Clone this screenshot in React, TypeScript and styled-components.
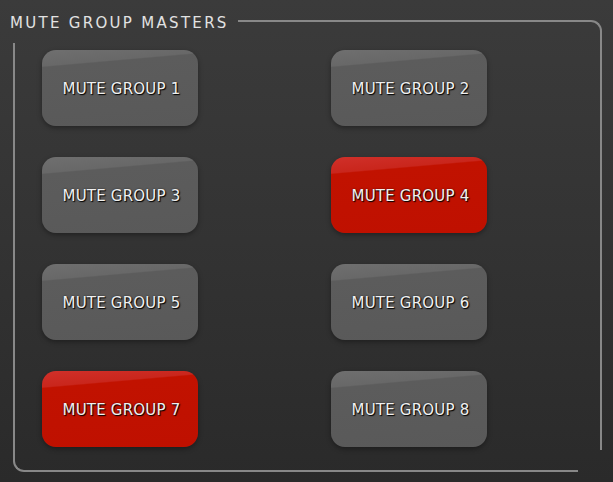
import React from "react";
import styled, { createGlobalStyle, css } from "styled-components";

const Global = createGlobalStyle`
  html, body { margin: 0; padding: 0; background: #333; }
  body { width: 613px; height: 482px; overflow: hidden; }
`;

const Panel = styled.section`
  position: relative;
  box-sizing: border-box;
  width: 613px;
  height: 482px;
  background: linear-gradient(180deg, #3b3b3b 0%, #333333 50%, #2a2a2a 100%);
  font-family: "DejaVu Sans", Verdana, sans-serif;
  padding: 13px 0 0 10px;

  &::before {
    content: "";
    position: absolute;
    left: 238px;
    top: 20px;
    width: 362px;
    height: 428px;
    border-top: 2px solid #888888;
    border-right: 2px solid #888888;
    border-top-right-radius: 11px;
    pointer-events: none;
  }

  &::after {
    content: "";
    position: absolute;
    left: 13px;
    top: 43px;
    width: 563px;
    height: 427px;
    border-left: 2px solid #888888;
    border-bottom: 2px solid #888888;
    border-bottom-left-radius: 11px;
    pointer-events: none;
  }
`;

const Title = styled.h1`
  margin: 0;
  font-size: 15px;
  font-weight: normal;
  letter-spacing: 2.3px;
  line-height: 20px;
  color: #e2e2e2;
`;

const Grid = styled.div`
  display: grid;
  grid-template-columns: 156px 156px;
  grid-auto-rows: 76px;
  column-gap: 133px;
  row-gap: 31px;
  margin: 17px 0 0 32px;
`;

const MuteButton = styled.button<{ $active?: boolean }>`
  border: none;
  border-radius: 14px;
  padding: 2px 0 0 3px;
  display: flex;
  align-items: center;
  justify-content: center;
  font-family: "DejaVu Sans", Verdana, sans-serif;
  font-size: 15px;
  letter-spacing: 0.2px;
  color: #f0f0f0;
  text-shadow: 1px 1px 1px #000, 0 0 2px rgba(0, 0, 0, 0.6);
  box-shadow: 0 2px 5px rgba(0, 0, 0, 0.35);
  cursor: pointer;
  ${(p) =>
    p.$active
      ? css`
          background: linear-gradient(
            175deg,
            #d0302a 0%,
            #c9261c 18%,
            #c11200 19.5%,
            #bf1000 100%
          );
        `
      : css`
          background: linear-gradient(
            175deg,
            #6f6f6f 0%,
            #686868 18%,
            #5c5c5c 19.5%,
            #595959 100%
          );
        `}
`;

const groups = [1, 2, 3, 4, 5, 6, 7, 8];
const active = new Set([4, 7]);

export default function App() {
  return (
    <>
      <Global />
      <Panel>
        <Title>MUTE GROUP MASTERS</Title>
        <Grid>
          {groups.map((g) => (
            <MuteButton key={g} $active={active.has(g)}>
              MUTE GROUP {g}
            </MuteButton>
          ))}
        </Grid>
      </Panel>
    </>
  );
}
